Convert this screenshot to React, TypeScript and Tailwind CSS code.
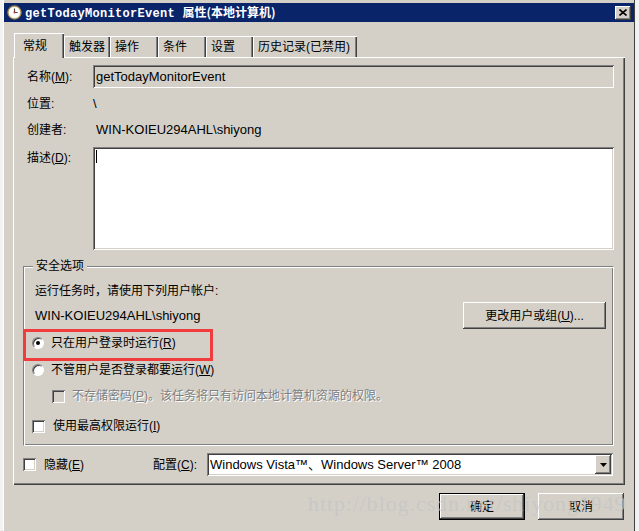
import React from "react";

const ui = "font-['Liberation_Sans','Noto_Sans_CJK_SC',sans-serif] text-[12px] leading-[16px]";
const sunken =
  "shadow-[inset_1px_1px_0_#808080,inset_-1px_-1px_0_#ffffff,inset_2px_2px_0_#404040,inset_-2px_-2px_0_#d4d0c8]";
const raised =
  "shadow-[inset_-1px_-1px_0_#404040,inset_1px_1px_0_#ffffff,inset_-2px_-2px_0_#808080,inset_2px_2px_0_#d4d0c8]";

function Radio({ checked }: { checked?: boolean }) {
  return (
    <span className="relative inline-flex h-[12px] w-[12px] shrink-0 items-center justify-center rounded-full border border-t-[#808080] border-l-[#808080] border-b-white border-r-white bg-white shadow-[inset_1px_1px_0_#404040]">
      {checked && <span className="h-[4px] w-[4px] rounded-full bg-black" />}
    </span>
  );
}

function Check({ disabled }: { disabled?: boolean }) {
  return (
    <span
      className={`inline-block h-[13px] w-[13px] shrink-0 ${sunken} ${disabled ? "bg-[#d4d0c8]" : "bg-white"}`}
    />
  );
}

function Key({ k }: { k: string }) {
  return (
    <>
      (<u>{k}</u>)
    </>
  );
}

function ClockIcon() {
  return (
    <svg width="15" height="15" viewBox="0 0 15 15">
      <circle cx="7.5" cy="7.5" r="6.6" fill="#f6f1d8" stroke="#9a8450" strokeWidth="1.2" />
      <circle cx="7.5" cy="7.5" r="5" fill="#ffffff" />
      <path d="M7.5 3.6 V7.5 H10.6" stroke="#4a4a4a" strokeWidth="1.2" fill="none" />
      <circle cx="7.5" cy="7.5" r="0.9" fill="#c0392b" />
    </svg>
  );
}

const tabs = ["触发器", "操作", "条件", "设置", "历史记录(已禁用)"];
const tabWidths = ["w-[46px]", "w-[48px]", "w-[48px]", "w-[47px]", "w-[104px]"];

export default function App() {
  return (
    <div className={`relative h-[531px] w-[639px] overflow-hidden bg-[#f2f2f2] ${ui}`}>
      <div className="ml-[3px] flex h-[531px] w-[632px] flex-col bg-[#d4d0c8] px-[1px] pt-[3px] shadow-[inset_-1px_0_0_#404040,inset_1px_0_0_#ffffff]">
        {/* title bar */}
        <div className="flex h-[19px] items-center bg-[#0a246a] pl-[3px] pr-[3px]">
          <ClockIcon />
          <span className="ml-[3px] whitespace-nowrap font-['Liberation_Mono','Noto_Sans_CJK_SC',monospace] text-[12px] font-bold tracking-[0.3px] text-white">
            getTodayMonitorEvent{" "}
            <span className="font-['Noto_Sans_CJK_SC',sans-serif] text-[12px] tracking-normal">属性(本地计算机)</span>
          </span>
          <div className={`ml-auto flex h-[14px] w-[16px] items-center justify-center bg-[#d4d0c8] ${raised}`}>
            <svg width="8" height="7" viewBox="0 0 8 7">
              <path d="M0.5 0.5 L7.5 6.5 M7.5 0.5 L0.5 6.5" stroke="#000" strokeWidth="1.6" />
            </svg>
          </div>
        </div>

        {/* tabs */}
        <div className="ml-[10px] mt-[11px] flex h-[24px] items-end whitespace-nowrap">
          <div className="relative z-10 -mb-px flex h-[25px] w-[50px] items-start border-l border-t border-white bg-[#d4d0c8] pl-[8px] pt-[4px] shadow-[inset_-1px_0_0_#404040,inset_-2px_0_0_#808080]">
            常规
          </div>
          {tabs.map((t, i) => (
            <div
              key={t}
              className={`flex h-[21px] ${tabWidths[i]} items-start border-l border-t border-white pl-[4px] pt-[2px] shadow-[inset_-1px_0_0_#404040,inset_-2px_0_0_#808080]`}
            >
              {t}
            </div>
          ))}
        </div>

        {/* panel */}
        <div className="ml-[9px] flex h-[428px] w-[612px] flex-col border-l border-t border-white shadow-[inset_-1px_-1px_0_#404040,inset_-2px_-2px_0_#808080]">
          <div className="mt-[7px] flex h-[23px] items-center">
            <span className="w-[79px] pl-[13px]">
              名称<Key k="M" />:
            </span>
            <div className={`flex h-[23px] w-[521px] items-center bg-[#d4d0c8] pl-[3px] text-[13px] ${sunken}`}>
              getTodayMonitorEvent
            </div>
          </div>
          <div className="mt-[5px] flex h-[22px] items-center">
            <span className="w-[79px] pl-[13px]">位置:</span>
            <span className="text-[13px]">\</span>
          </div>
          <div className="mt-[4px] flex h-[22px] items-center">
            <span className="w-[79px] pl-[13px]">创建者:</span>
            <span className="pl-[3px] text-[13px]">WIN-KOIEU294AHL\shiyong</span>
          </div>
          <div className="mt-[6px] flex items-start">
            <span className="w-[79px] pl-[13px] pt-[3px]">
              描述<Key k="D" />:
            </span>
            <div className={`h-[103px] w-[521px] bg-white pl-[3px] pt-[3px] ${sunken}`}>
              <div className="h-[13px] w-px bg-black" />
            </div>
          </div>

          {/* group box */}
          <div className="relative ml-[9px] mt-[16px] flex h-[180px] w-[591px] flex-col border border-b-white border-l-[#808080] border-r-white border-t-[#808080] shadow-[inset_1px_1px_0_#ffffff,inset_-1px_-1px_0_#808080]">
            <span className="absolute -top-[9px] left-[9px] bg-[#d4d0c8] px-[3px]">安全选项</span>
            <div className="absolute left-[-1px] top-[62px] h-[32px] w-[190px] border-[3px] border-[#f03c3c]" />
            <div className="mt-[16px] pl-[11px]">运行任务时，请使用下列用户帐户:</div>
            <div className="mt-[3px] flex h-[27px] items-center">
              <span className="pl-[11px] text-[13px]">WIN-KOIEU294AHL\shiyong</span>
              <div className={`ml-auto mr-[7px] flex h-[27px] w-[143px] items-center justify-center ${raised}`}>
                更改用户或组<Key k="U" />...
              </div>
            </div>
            <div className="mt-[4px] flex h-[20px] items-center gap-[7px] pl-[8px]">
              <Radio checked />
              <span>
                只在用户登录时运行<Key k="R" />
              </span>
            </div>
            <div className="mt-[7px] flex h-[20px] items-center gap-[7px] pl-[8px]">
              <Radio />
              <span>
                不管用户是否登录都要运行<Key k="W" />
              </span>
            </div>
            <div className="mt-[6px] flex h-[20px] items-center gap-[7px] pl-[28px] text-[#808080] [text-shadow:1px_1px_0_#ffffff]">
              <Check disabled />
              <span>
                不存储密码<Key k="P" />。该任务将只有访问本地计算机资源的权限。
              </span>
            </div>
            <div className="mt-[10px] flex h-[20px] items-center gap-[8px] pl-[8px]">
              <Check />
              <span>
                使用最高权限运行<Key k="I" />
              </span>
            </div>
          </div>

          {/* bottom row */}
          <div className="mt-[7px] flex h-[23px] items-center">
            <div className="flex w-[139px] items-center gap-[8px] pl-[9px]">
              <Check />
              <span>
                隐藏<Key k="E" />
              </span>
            </div>
            <span className="w-[54px]">
              配置<Key k="C" />:
            </span>
            <div className={`flex h-[23px] w-[406px] items-center bg-white pl-[3px] pr-[2px] text-[13px] ${sunken}`}>
              <span className="flex-1">Windows Vista™、Windows Server™ 2008</span>
              <div className={`flex h-[19px] w-[16px] items-center justify-center bg-[#d4d0c8] ${raised}`}>
                <svg width="7" height="4" viewBox="0 0 7 4">
                  <path d="M0 0 H7 L3.5 4 Z" fill="#000" />
                </svg>
              </div>
            </div>
          </div>
        </div>

        {/* buttons */}
        <div className="mr-[10px] mt-[8px] flex justify-end gap-[13px]">
          <div className={`flex h-[27px] w-[86px] items-center justify-center border border-black ${raised}`}>确定</div>
          <div className={`flex h-[27px] w-[86px] items-center justify-center ${raised}`}>取消</div>
        </div>
      </div>

      <div className="pointer-events-none absolute left-[308px] top-[496px] font-['Liberation_Serif',serif] text-[22px] tracking-[0.9px] text-[#c4c4c4]/70">
        http://blog.csdn.net/shiyong1949
      </div>
    </div>
  );
}
